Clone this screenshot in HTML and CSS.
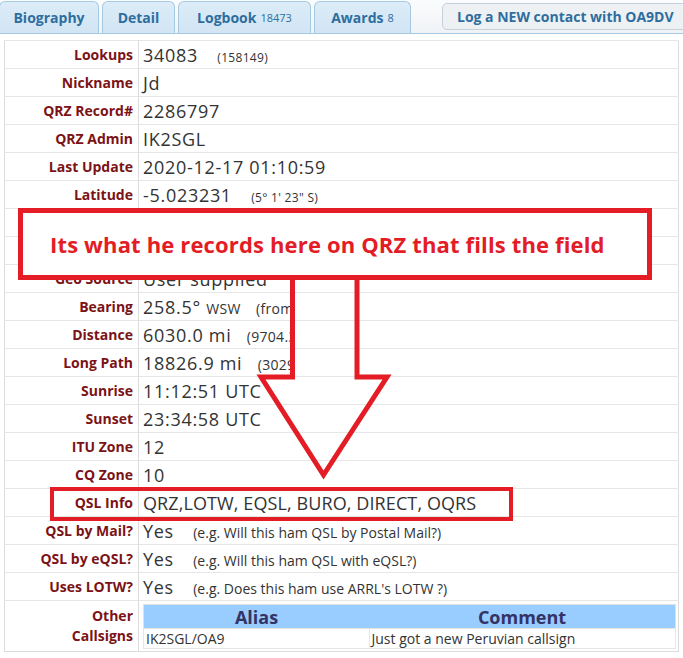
FILE: index.html
```html
<!DOCTYPE html>
<html lang="en">
<head>
    <meta charset="UTF-8">
    <title>OA9DV - QRZ Detail</title>
    <link rel="stylesheet" href="styles.css">
</head>
<body>
<div class="page">
    <div class="tabs">
        <div class="tab tab-bio">Biography</div>
        <div class="tab tab-detail">Detail</div>
        <div class="tab tab-log">Logbook <span class="count">18473</span></div>
        <div class="tab tab-awards">Awards <span class="count">8</span></div>
        <div class="log-btn">Log a NEW contact with OA9DV</div>
    </div>

    <table class="detail">
        <tr><td class="lbl">Lookups</td><td class="val">34083 <span class="small">(158149)</span></td></tr>
        <tr><td class="lbl">Nickname</td><td class="val">Jd</td></tr>
        <tr><td class="lbl">QRZ Record#</td><td class="val">2286797</td></tr>
        <tr><td class="lbl">QRZ Admin</td><td class="val">IK2SGL</td></tr>
        <tr><td class="lbl">Last Update</td><td class="val">2020-12-17 01:10:59</td></tr>
        <tr><td class="lbl">Latitude</td><td class="val">-5.023231 <span class="small">(5° 1' 23" S)</span></td></tr>
        <tr><td class="lbl">Longitude</td><td class="val">-73.765823 <span class="small">(73° 45' 57" W)</span></td></tr>
        <tr><td class="lbl">Grid Square</td><td class="val">FI84</td></tr>
        <tr><td class="lbl">Geo Source</td><td class="val">User supplied</td></tr>
        <tr><td class="lbl">Bearing</td><td class="val"><div class="clip">258.5° <span class="dir">WSW</span> <span class="note-s">(from QTH)</span></div></td></tr>
        <tr><td class="lbl">Distance</td><td class="val"><div class="clip">6030.0 mi <span class="note-s">(9704.3 km)</span></div></td></tr>
        <tr><td class="lbl">Long Path</td><td class="val"><div class="clip">18826.9 mi <span class="note-s">(30297.8 km)</span></div></td></tr>
        <tr><td class="lbl">Sunrise</td><td class="val">11:12:51 UTC</td></tr>
        <tr><td class="lbl">Sunset</td><td class="val">23:34:58 UTC</td></tr>
        <tr><td class="lbl">ITU Zone</td><td class="val">12</td></tr>
        <tr><td class="lbl">CQ Zone</td><td class="val">10</td></tr>
        <tr><td class="lbl">QSL Info</td><td class="val qsl">QRZ,LOTW, EQSL, BURO, DIRECT, OQRS</td></tr>
        <tr><td class="lbl">QSL by Mail?</td><td class="val">Yes <span class="hint">(e.g. Will this ham QSL by Postal Mail?)</span></td></tr>
        <tr><td class="lbl">QSL by eQSL?</td><td class="val">Yes <span class="hint">(e.g. Will this ham QSL with eQSL?)</span></td></tr>
        <tr><td class="lbl">Uses LOTW?</td><td class="val">Yes <span class="hint">(e.g. Does this ham use ARRL's LOTW ?)</span></td></tr>
        <tr class="last">
            <td class="lbl">Other<br>Callsigns</td>
            <td class="val">
                <table class="alias">
                    <tr><th class="col-alias">Alias</th><th>Comment</th></tr>
                    <tr><td>IK2SGL/OA9</td><td>Just got a new Peruvian callsign</td></tr>
                </table>
            </td>
        </tr>
    </table>

    <!-- annotation drawn over the screenshot -->
    <svg class="marks" width="683" height="658" viewBox="0 0 683 658">
        <rect x="20.5" y="210.5" width="629" height="67" fill="#fff" stroke="#e31c25" stroke-width="5"/>
        <polyline points="292.5,278 292.5,377 261,377 323.5,475 387,377 357,377 357,278" fill="none" stroke="#e31c25" stroke-width="5" stroke-linejoin="miter"/>
        <rect x="52" y="489" width="459" height="30" fill="none" stroke="#e31c25" stroke-width="4"/>
    </svg>
    <div class="callout">Its what he records here on QRZ that fills the field</div>
</div>
</body>
</html>
```

FILE: styles.css
```css
body {
    margin: 0;
    font-family: "Open Sans", sans-serif;
    background: #fff;
}
.page {
    position: relative;
    width: 683px;
    height: 658px;
    overflow: hidden;
}
.tabs {
    display: flex;
    align-items: flex-end;
    gap: 3px;
    height: 33px;
    background: linear-gradient(#fbfcfd, #f0f3f6);
    border-bottom: 1px solid #a6c9e2;
}
.tab {
    display: flex;
    align-items: center;
    justify-content: center;
    flex-shrink: 0;
    height: 32px;
    box-sizing: border-box;
    border: 1px solid #a6c9e2;
    border-bottom: none;
    border-radius: 6px 6px 0 0;
    background: linear-gradient(#dcecf8, #d2e5f4);
    color: #2e6e9e;
    font-size: 14px;
    font-weight: 700;
}
.tab .count {
    font-size: 11px;
    font-weight: 400;
    margin-left: 4px;
}
.tab-bio { width: 100px; margin-left: -1px; }
.tab-detail { width: 73px; }
.tab-log { width: 133px; }
.tab-awards { width: 97px; }
.log-btn {
    align-self: center;
    margin-left: 28px;
    width: 260px;
    flex-shrink: 0;
    height: 27px;
    line-height: 26px;
    box-sizing: border-box;
    padding-left: 14px;
    border: 1px solid #c5d0dc;
    border-radius: 5px;
    background: #eef1f4;
    color: #2e6e9e;
    font-size: 14px;
    font-weight: 700;
    white-space: nowrap;
}

.detail {
    margin: 6px 0 0 4px;
    width: 675px;
    border-collapse: collapse;
    border: 1px solid #dcdcdc;
}
.detail > tbody > tr > td {
    border-top: 1px solid #e6e6e6;
    height: 27px;
    padding: 0;
    white-space: nowrap;
}
.detail > tbody > tr > td.lbl {
    width: 128px;
    padding-right: 5px;
    text-align: right;
    border-right: 1px solid #dcdcdc;
    color: #7b1316;
    font-size: 14px;
    font-weight: 700;
}
.detail > tbody > tr > td.val {
    padding-left: 4px;
    color: #333;
    font-size: 18px;
    letter-spacing: 0.7px;
}
.detail > tbody > tr > td.qsl {
    letter-spacing: 0.1px;
}
.small {
    font-size: 12px;
    letter-spacing: 0.3px;
    margin-left: 14px;
}
.dir {
    font-size: 14px;
    letter-spacing: 0.3px;
}
.note-s {
    font-size: 14px;
    letter-spacing: 0.3px;
    margin-left: 10px;
}
.hint {
    font-size: 14px;
    letter-spacing: 0;
    margin-left: 14px;
}
.clip {
    width: 149px;
    overflow: hidden;
}
.detail > tbody > tr.last > td {
    height: 49px;
    line-height: 20px;
}
.alias {
    width: 533px;
    margin: 3px 0 2px;
    border-collapse: collapse;
    border: 1px solid #e2e2e2;
    letter-spacing: 0;
}
.alias th {
    background: #99ccff;
    color: #333366;
    font-size: 18px;
    font-weight: 700;
    height: 23px;
    line-height: 22px;
    padding: 0;
}
.alias th.col-alias { width: 225px; }
.alias td {
    font-size: 14px;
    height: 19px;
    line-height: 18px;
    padding: 0 2px;
    border: 1px solid #e6e6e6;
    color: #333;
}

.marks {
    position: absolute;
    top: 0;
    left: 0;
    pointer-events: none;
}
.callout {
    position: absolute;
    left: 50px;
    top: 229px;
    color: #e31c25;
    font-size: 22px;
    font-weight: 700;
    letter-spacing: 0.15px;
    white-space: nowrap;
}
```
